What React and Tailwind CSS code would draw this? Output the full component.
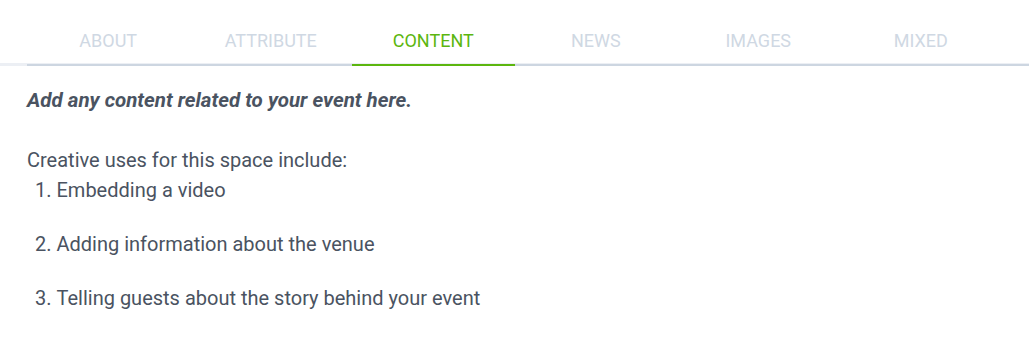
export default function App() {
  const tabs = ["ABOUT", "ATTRIBUTE", "CONTENT", "NEWS", "IMAGES", "MIXED"];
  const active = "CONTENT";
  return (
    <div className="w-[1029px] h-[355px] bg-white" style={{ fontFamily: "Roboto, 'Liberation Sans', sans-serif" }}>
      <div className="shadow-[inset_0_-3px_0_#eceff4]">
        <ul className="ml-[27px] flex border-b-2 border-[#cdd6e1]">
          {tabs.map((t) => (
            <li
              key={t}
              className={
                "w-[162.5px] h-[66px] -mb-[2px] pt-[16px] flex items-center justify-center text-[18px] font-normal border-b-2 " +
                (t === active
                  ? "text-[#5cb60f] border-[#5cb60f]"
                  : "text-[#cfd8e3] border-transparent")
              }
            >
              {t}
            </li>
          ))}
        </ul>
      </div>
      <div className="px-[27px] pt-[19px] text-[#4a5361] text-[20px] leading-[30px]">
        <p className="font-bold italic text-[20.5px]">Add any content related to your event here.</p>
        <p className="mt-[30px]">Creative uses for this space include:</p>
        <ol className="list-decimal list-inside pl-[8px] flex flex-col gap-[24px]">
          <li>Embedding a video</li>
          <li>Adding information about the venue</li>
          <li>Telling guests about the story behind your event</li>
        </ol>
      </div>
    </div>
  );
}
